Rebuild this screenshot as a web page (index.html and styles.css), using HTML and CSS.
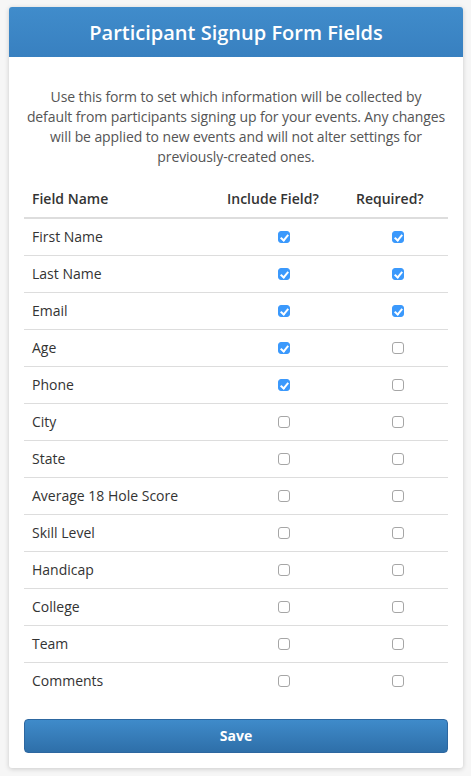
FILE: index.html
```html
<!DOCTYPE html>
<html lang="en">
<head>
    <meta charset="UTF-8">
    <meta name="viewport" content="width=device-width, initial-scale=1.0">
    <title>Participant Signup Form Fields</title>
    <link rel="stylesheet" href="styles.css">
</head>
<body>
    <div class="panel">
        <div class="panel-heading">
            <h1>Participant Signup Form Fields</h1>
        </div>
        <div class="panel-body">
            <p class="intro">Use this form to set which information will be collected by<br>default from participants signing up for your events. Any changes<br>will be applied to new events and will not alter settings for<br>previously-created ones.</p>
            <form id="fields-form">
                <table class="fields-table">
                    <thead>
                        <tr>
                            <th class="col-name">Field Name</th>
                            <th class="col-include">Include Field?</th>
                            <th class="col-required">Required?</th>
                        </tr>
                    </thead>
                    <tbody>
                        <tr>
                            <td>First Name</td>
                            <td class="check"><input type="checkbox" checked></td>
                            <td class="check"><input type="checkbox" checked></td>
                        </tr>
                        <tr>
                            <td>Last Name</td>
                            <td class="check"><input type="checkbox" checked></td>
                            <td class="check"><input type="checkbox" checked></td>
                        </tr>
                        <tr>
                            <td>Email</td>
                            <td class="check"><input type="checkbox" checked></td>
                            <td class="check"><input type="checkbox" checked></td>
                        </tr>
                        <tr>
                            <td>Age</td>
                            <td class="check"><input type="checkbox" checked></td>
                            <td class="check"><input type="checkbox"></td>
                        </tr>
                        <tr>
                            <td>Phone</td>
                            <td class="check"><input type="checkbox" checked></td>
                            <td class="check"><input type="checkbox"></td>
                        </tr>
                        <tr>
                            <td>City</td>
                            <td class="check"><input type="checkbox"></td>
                            <td class="check"><input type="checkbox"></td>
                        </tr>
                        <tr>
                            <td>State</td>
                            <td class="check"><input type="checkbox"></td>
                            <td class="check"><input type="checkbox"></td>
                        </tr>
                        <tr>
                            <td>Average 18 Hole Score</td>
                            <td class="check"><input type="checkbox"></td>
                            <td class="check"><input type="checkbox"></td>
                        </tr>
                        <tr>
                            <td>Skill Level</td>
                            <td class="check"><input type="checkbox"></td>
                            <td class="check"><input type="checkbox"></td>
                        </tr>
                        <tr>
                            <td>Handicap</td>
                            <td class="check"><input type="checkbox"></td>
                            <td class="check"><input type="checkbox"></td>
                        </tr>
                        <tr>
                            <td>College</td>
                            <td class="check"><input type="checkbox"></td>
                            <td class="check"><input type="checkbox"></td>
                        </tr>
                        <tr>
                            <td>Team</td>
                            <td class="check"><input type="checkbox"></td>
                            <td class="check"><input type="checkbox"></td>
                        </tr>
                        <tr>
                            <td>Comments</td>
                            <td class="check"><input type="checkbox"></td>
                            <td class="check"><input type="checkbox"></td>
                        </tr>
                    </tbody>
                </table>
                <button type="submit" class="save-btn">Save</button>
            </form>
        </div>
    </div>
</body>
</html>
```

FILE: styles.css
```css
body {
    font-family: "Open Sans", Arial, sans-serif;
    font-size: 14px;
    color: #333;
    margin: 0;
    padding: 7px 8px 8px 9px;
    background-color: #f6f6f6;
}

.panel {
    background-color: #fff;
    border-radius: 3px;
    box-shadow: 0 1px 5px rgba(0, 0, 0, 0.18);
}

.panel-heading {
    height: 50px;
    display: flex;
    align-items: center;
    justify-content: center;
    background: linear-gradient(#408ccb, #3880c0);
    border-radius: 3px 3px 0 0;
}

.panel-heading h1 {
    margin: 0;
    color: #fff;
    font-size: 20px;
    font-weight: 600;
}

.panel-body {
    padding: 30px 15px 15px;
}

.intro {
    margin: 0 -4px 14px;
    text-align: center;
    color: #555;
    line-height: 20px;
    letter-spacing: -0.1px;
}

.fields-table {
    width: 100%;
    border-collapse: collapse;
}

.fields-table th,
.fields-table td {
    padding: 8px;
    line-height: 20px;
    text-align: left;
}

.fields-table th {
    font-weight: 600;
    border-bottom: 2px solid #ddd;
}

.fields-table td {
    border-bottom: 1px solid #ddd;
}

.fields-table tbody tr:last-child td {
    border-bottom: none;
}

.col-name {
    width: 179px;
}

.col-required {
    width: 84px;
}

.fields-table td.check {
    text-align: center;
}

.check input {
    appearance: none;
    -webkit-appearance: none;
    width: 12px;
    height: 12px;
    margin: 0;
    vertical-align: middle;
    border: 1px solid #a6a6a6;
    border-radius: 3px;
    background-color: #fff;
    position: relative;
    top: -1px;
}

.check input:checked {
    border-color: #3b99fc;
    background-color: #3b99fc;
}

.check input:checked::after {
    content: "";
    position: absolute;
    left: 3px;
    top: 1px;
    width: 3px;
    height: 6px;
    border: solid #fff;
    border-width: 0 2px 2px 0;
    transform: rotate(40deg);
}

.save-btn {
    display: block;
    width: 100%;
    height: 34px;
    margin-top: 20px;
    padding: 0 0 2px;
    font-family: inherit;
    font-size: 14px;
    font-weight: 700;
    color: #fff;
    border: 1px solid #2d67a0;
    border-radius: 4px;
    background: linear-gradient(#3f8bca, #2e6fa9);
    cursor: pointer;
}
```
